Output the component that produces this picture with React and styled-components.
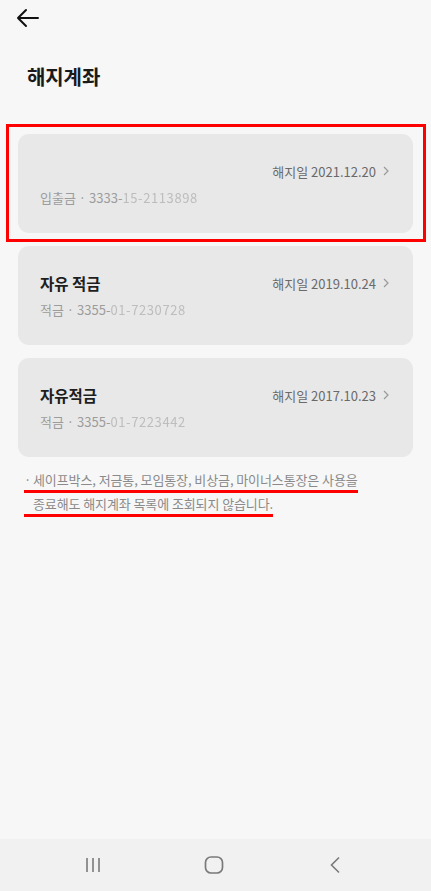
import React from "react";
import styled, { createGlobalStyle } from "styled-components";

const Global = createGlobalStyle`
  html, body { margin: 0; padding: 0; background: #f7f7f7; }
  body { font-family: "Noto Sans CJK KR", "Noto Sans", sans-serif; }
  * { box-sizing: border-box; }
`;

const Page = styled.div`
  width: 431px;
  height: 891px;
  display: flex;
  flex-direction: column;
  background: #f7f7f7;
`;

const Content = styled.div`
  flex: 1;
  display: flex;
  flex-direction: column;
`;

const TopBar = styled.div`
  height: 36px;
  display: flex;
  align-items: center;
  padding-left: 16px;
`;

const Title = styled.h1`
  margin: 0;
  padding: 29px 0 0 27px;
  height: 98px;
  font-size: 20px;
  font-weight: 700;
  line-height: 24px;
  color: #1a1a1a;
  letter-spacing: -0.1px;
`;

const List = styled.div`
  display: flex;
  flex-direction: column;
  gap: 13px;
  padding: 0 18px;
`;

const CardWrap = styled.div`
  position: relative;
`;

const Highlight = styled.div`
  position: absolute;
  top: -10px;
  left: -12px;
  right: -13px;
  bottom: -9px;
  border: 3px solid #ff0000;
  pointer-events: none;
`;

const Card = styled.div`
  height: 99px;
  background: #e8e8e8;
  border-radius: 11px;
  padding: 25px 24px 0 22px;
  display: flex;
  flex-direction: column;
`;

const Row = styled.div`
  display: flex;
  align-items: center;
  justify-content: space-between;
  height: 24px;
`;

const Name = styled.div`
  font-size: 15.5px;
  font-weight: 700;
  color: #1e1e1e;
`;

const DateText = styled.div`
  display: flex;
  align-items: center;
  gap: 7px;
  font-size: 13px;
  color: #6a6a6a;
`;

const Sub = styled.div`
  margin-top: 5px;
  height: 20px;
  line-height: 20px;
  font-size: 13px;
  color: #9c9c9c;
  display: flex;
  align-items: center;
  white-space: pre;
`;

const Masked = styled.span`
  display: inline-block;
  color: #bdbdbd;
  letter-spacing: 0.6px;
  filter: blur(0.6px);
`;

const Notes = styled.div`
  padding: 12px 0 0 24px;
  display: flex;
  flex-direction: column;
`;

const NoteLine = styled.div`
  width: fit-content;
  height: 24px;
  line-height: 21px;
  font-size: 13px;
  color: #8a8a8a;
  letter-spacing: -0.1px;
  border-bottom: 3px solid #ff0000;
  padding-left: ${(p) => (p.$indent ? "9px" : "0")};
`;

const Bullet = styled.span`
  display: inline-block;
  width: 9px;
`;

const NavBar = styled.div`
  height: 52px;
  background: #f1f1f1;
  display: flex;
  align-items: center;
  padding-left: 32px;
`;

const NavBtn = styled.div`
  width: 121px;
  display: flex;
  justify-content: center;
  align-items: center;
`;

const Chevron = () => (
  <svg width="6" height="10" viewBox="0 0 6 10">
    <path d="M1 1l4 4-4 4" fill="none" stroke="#9a9a9a" strokeWidth="1.2" />
  </svg>
);

const accounts = [
  { name: "", type: "입출금", num: "3333-", mask: "15-2113898", date: "2021.12.20", hl: true },
  { name: "자유 적금", type: "적금", num: "3355-", mask: "01-7230728", date: "2019.10.24" },
  { name: "자유적금", type: "적금", num: "3355-", mask: "01-7223442", date: "2017.10.23" },
];

export default function App() {
  return (
    <Page>
      <Global />
      <Content>
        <TopBar>
          <svg width="24" height="20" viewBox="0 0 24 20">
            <path d="M2 10h20M10 2L2 10l8 8" fill="none" stroke="#111" strokeWidth="2" strokeLinecap="round" strokeLinejoin="round" />
          </svg>
        </TopBar>
        <Title>해지계좌</Title>
        <List>
          {accounts.map((a) => (
            <CardWrap key={a.date}>
              <Card>
                <Row>
                  <Name>{a.name}</Name>
                  <DateText>
                    해지일 {a.date}
                    <Chevron />
                  </DateText>
                </Row>
                <Sub>
                  {a.type} · {a.num}
                  <Masked>{a.mask}</Masked>
                </Sub>
              </Card>
              {a.hl && <Highlight />}
            </CardWrap>
          ))}
        </List>
        <Notes>
          <NoteLine>
            <Bullet>·</Bullet>세이프박스, 저금통, 모임통장, 비상금, 마이너스통장은 사용을
          </NoteLine>
          <NoteLine $indent>종료해도 해지계좌 목록에 조회되지 않습니다.</NoteLine>
        </Notes>
      </Content>
      <NavBar>
        <NavBtn>
          <svg width="16" height="16" viewBox="0 0 16 16">
            <path d="M2 1v14M8 1v14M14 1v14" stroke="#7a7a7a" strokeWidth="1.6" />
          </svg>
        </NavBtn>
        <NavBtn>
          <svg width="20" height="18" viewBox="0 0 20 18">
            <rect x="1.5" y="1" width="17" height="16" rx="5.5" fill="none" stroke="#7a7a7a" strokeWidth="1.7" />
          </svg>
        </NavBtn>
        <NavBtn>
          <svg width="12" height="18" viewBox="0 0 12 18">
            <path d="M10 1.5L2.5 9l7.5 7.5" fill="none" stroke="#7a7a7a" strokeWidth="1.6" />
          </svg>
        </NavBtn>
      </NavBar>
    </Page>
  );
}
